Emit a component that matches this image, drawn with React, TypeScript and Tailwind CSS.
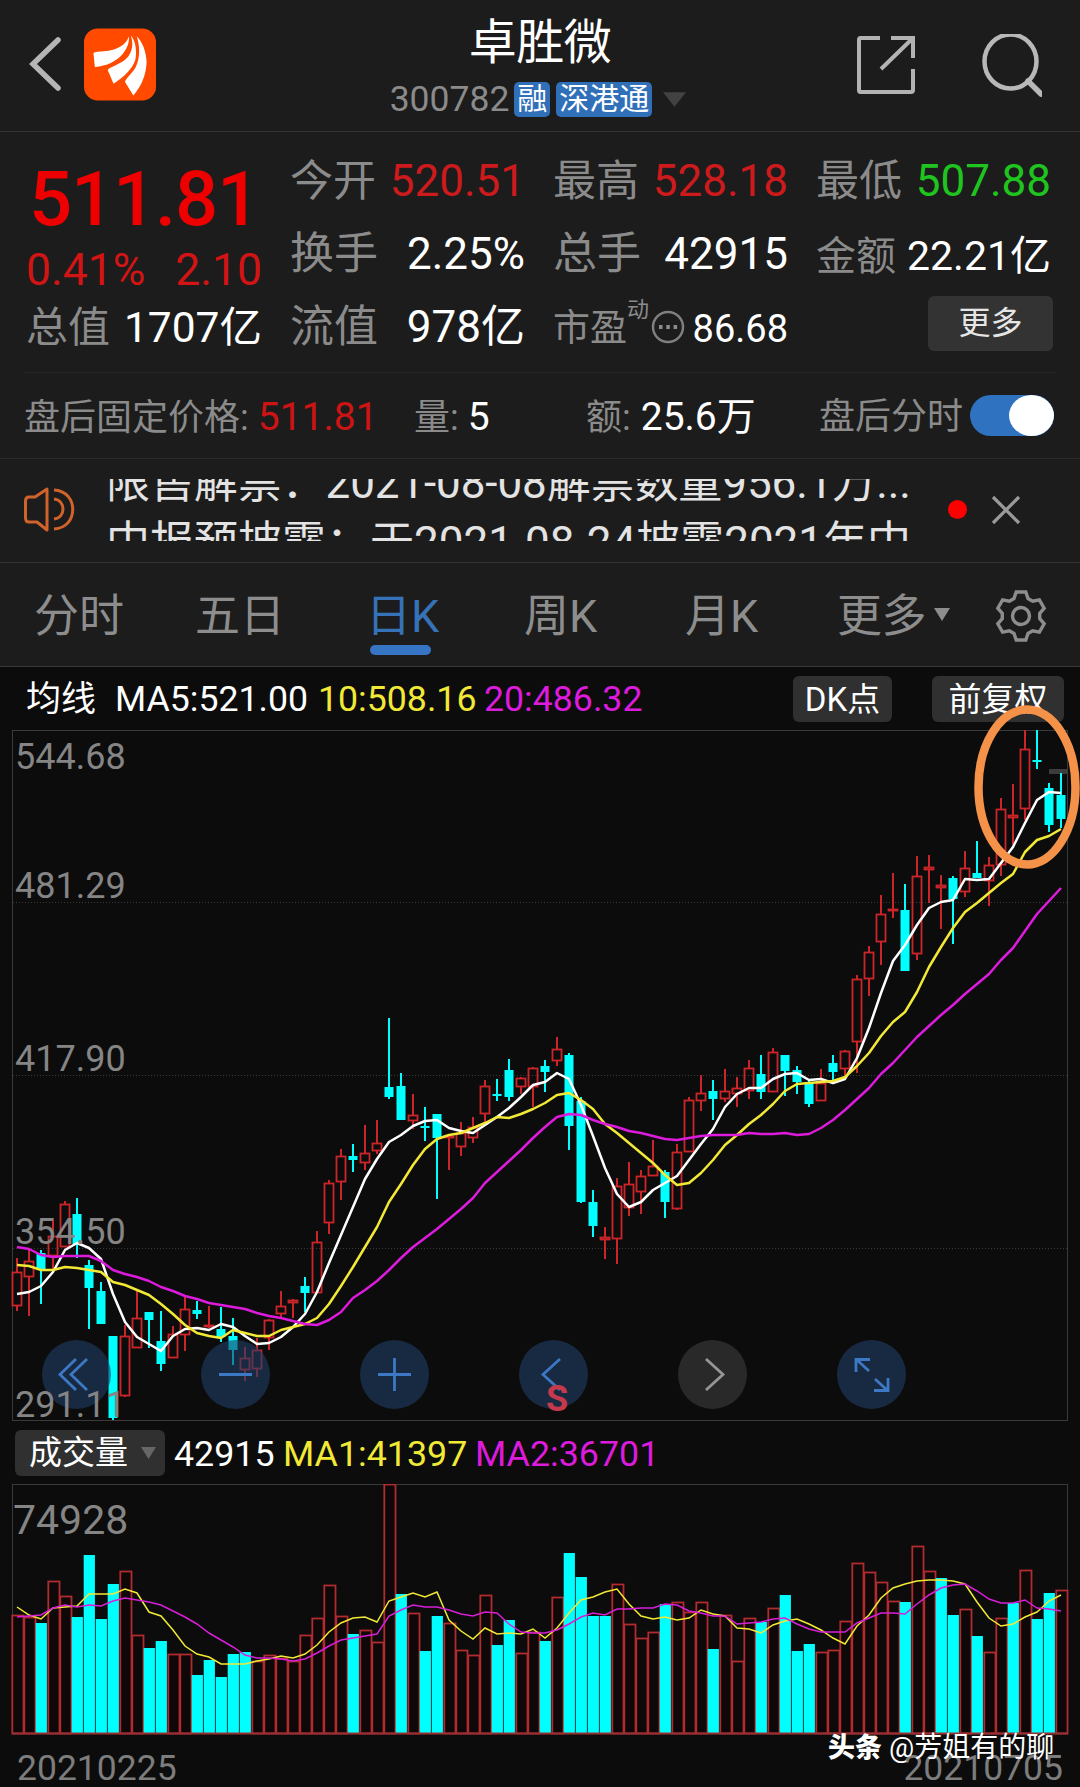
import React from "react";

type Candle = [kind: "r" | "c", high: number, top: number, bottom: number, low: number];

const X0 = 17;
const STEP = 12;
const UP = "#cc2529";
const DOWN = "#00ffff";

const candles: Candle[] = [
  ["r", 1258, 1272, 1306, 1311], ["r", 1249, 1261, 1277, 1316], ["c", 1250, 1253, 1269, 1304],
  ["r", 1218, 1236, 1256, 1270], ["r", 1201, 1204, 1247, 1247], ["c", 1198, 1214, 1244, 1258],
  ["c", 1260, 1265, 1288, 1329], ["c", 1282, 1291, 1324, 1324], ["c", 1336, 1336, 1418, 1420],
  ["r", 1325, 1336, 1396, 1397], ["r", 1291, 1318, 1348, 1348], ["c", 1312, 1312, 1320, 1348],
  ["c", 1311, 1341, 1364, 1371], ["r", 1326, 1334, 1358, 1358], ["r", 1295, 1309, 1335, 1351],
  ["c", 1301, 1310, 1314, 1319], ["r", 1306, 1325, 1327, 1328], ["c", 1307, 1329, 1337, 1342],
  ["c", 1318, 1336, 1350, 1365], ["r", 1347, 1358, 1370, 1381], ["r", 1338, 1350, 1369, 1377],
  ["r", 1319, 1320, 1338, 1350], ["r", 1291, 1306, 1314, 1318], ["r", 1299, 1300, 1303, 1318],
  ["c", 1277, 1286, 1293, 1312], ["r", 1231, 1242, 1293, 1293], ["r", 1180, 1183, 1223, 1234],
  ["r", 1149, 1156, 1182, 1200], ["c", 1144, 1156, 1160, 1172], ["r", 1125, 1153, 1163, 1170],
  ["r", 1120, 1143, 1151, 1154], ["c", 1018, 1087, 1097, 1099], ["c", 1073, 1086, 1120, 1120],
  ["r", 1094, 1115, 1121, 1129], ["c", 1107, 1126, 1128, 1141], ["c", 1114, 1114, 1138, 1199],
  ["r", 1135, 1136, 1138, 1170], ["r", 1122, 1133, 1147, 1156], ["r", 1117, 1127, 1138, 1143],
  ["r", 1080, 1086, 1114, 1125], ["c", 1079, 1094, 1096, 1101], ["c", 1059, 1070, 1097, 1101],
  ["r", 1077, 1078, 1087, 1094], ["r", 1067, 1068, 1087, 1107], ["c", 1060, 1066, 1072, 1092],
  ["r", 1037, 1049, 1061, 1066], ["c", 1053, 1055, 1126, 1150], ["c", 1097, 1101, 1202, 1203],
  ["c", 1190, 1202, 1226, 1237], ["r", 1227, 1237, 1240, 1259], ["r", 1178, 1186, 1239, 1264],
  ["r", 1162, 1184, 1208, 1216], ["r", 1170, 1176, 1192, 1214], ["r", 1140, 1166, 1176, 1176],
  ["c", 1170, 1172, 1202, 1218], ["r", 1144, 1152, 1209, 1210], ["r", 1097, 1100, 1152, 1152],
  ["r", 1075, 1093, 1101, 1111], ["c", 1080, 1091, 1099, 1120], ["r", 1069, 1091, 1099, 1102],
  ["r", 1077, 1088, 1094, 1107], ["r", 1060, 1068, 1091, 1099], ["c", 1055, 1074, 1092, 1099],
  ["r", 1048, 1052, 1092, 1092], ["c", 1055, 1055, 1071, 1096], ["c", 1066, 1070, 1082, 1094],
  ["c", 1080, 1082, 1104, 1107], ["r", 1069, 1083, 1101, 1101], ["c", 1055, 1063, 1072, 1081],
  ["r", 1050, 1051, 1069, 1075], ["r", 975, 979, 1042, 1073], ["r", 946, 952, 979, 996],
  ["r", 895, 914, 942, 965], ["r", 873, 909, 911, 918], ["c", 884, 910, 971, 971],
  ["r", 856, 876, 954, 960], ["r", 855, 867, 870, 903], ["r", 875, 885, 888, 929],
  ["c", 876, 878, 899, 944], ["r", 851, 868, 892, 897], ["c", 841, 873, 878, 878],
  ["r", 857, 865, 881, 906], ["r", 798, 809, 865, 876], ["r", 784, 815, 818, 845],
  ["r", 730, 749, 809, 820], ["c", 730, 760, 762, 769], ["c", 783, 788, 825, 832],
  ["c", 773, 795, 819, 828],
];

const ma5 = [
  1294, 1292, 1286, 1272, 1250, 1243, 1248, 1259, 1294, 1322, 1337, 1344, 1351, 1336, 1329, 1328, 1330, 1324, 1327,
  1336, 1344, 1343, 1337, 1327, 1314, 1292, 1263, 1235, 1207, 1179, 1159, 1142, 1135, 1126, 1121, 1120, 1128, 1131,
  1133, 1125, 1117, 1108, 1097, 1085, 1082, 1073, 1079, 1105, 1136, 1168, 1194, 1207, 1202, 1190, 1183, 1176, 1160,
  1144, 1129, 1107, 1094, 1088, 1088, 1079, 1074, 1073, 1080, 1079, 1083, 1079, 1058, 1028, 993, 961, 945, 925, 908,
  902, 900, 879, 880, 879, 863, 847, 823, 800, 792, 793,
];
const ma10 = [
  1265, 1266, 1270, 1270, 1267, 1268, 1270, 1272, 1282, 1285, 1290, 1295, 1304, 1314, 1325, 1333, 1336, 1338, 1330,
  1333, 1336, 1336, 1330, 1327, 1324, 1318, 1304, 1286, 1267, 1247, 1227, 1202, 1184, 1165, 1149, 1139, 1135, 1133,
  1128, 1123, 1117, 1118, 1114, 1109, 1103, 1095, 1093, 1100, 1109, 1124, 1133, 1143, 1153, 1163, 1175, 1185, 1183,
  1173, 1160, 1145, 1135, 1124, 1115, 1104, 1091, 1084, 1083, 1082, 1081, 1077, 1066, 1053, 1036, 1022, 1012, 992,
  967, 947, 928, 912, 903, 893, 883, 874, 852, 840, 836, 829,
];
const ma20 = [
  1247, 1249, 1255, 1257, 1256, 1256, 1256, 1261, 1270, 1274, 1277, 1281, 1287, 1291, 1296, 1299, 1303, 1305, 1307,
  1309, 1313, 1316, 1318, 1321, 1324, 1325, 1320, 1312, 1298, 1290, 1281, 1270, 1258, 1247, 1238, 1229, 1219, 1209,
  1198, 1183, 1172, 1161, 1150, 1138, 1127, 1117, 1114, 1115, 1120, 1124, 1127, 1131, 1133, 1136, 1139, 1140, 1138,
  1136, 1135, 1135, 1135, 1133, 1134, 1134, 1133, 1135, 1134, 1128, 1120, 1110, 1099, 1088, 1074, 1063, 1050, 1037,
  1026, 1015, 1005, 994, 984, 974, 960, 948, 931, 914, 901, 888,
];

const volumeKinds =
  "rrcrrcccc" + "rrccrrccccc" + "rrrrrrrrc" + "rrrcrccrrrrccrrcrcccc" + "rrrrcrrrc" + "rrrcrccc" + "rrrrrrrcrrcc" + "rcrrcrccr";
const volumeTops = [
  1615, 1617, 1623, 1581, 1596, 1617, 1555, 1619, 1584, 1571, 1635, 1648, 1641, 1654, 1654, 1675, 1660, 1677, 1654,
  1652, 1661, 1655, 1658, 1661, 1635, 1618, 1585, 1616, 1634, 1630, 1642, 1484, 1594, 1613, 1651, 1616, 1623, 1650,
  1655, 1595, 1645, 1620, 1653, 1632, 1641, 1597, 1553, 1577, 1616, 1616, 1584, 1624, 1638, 1632, 1604, 1602, 1612,
  1602, 1649, 1615, 1661, 1618, 1622, 1608, 1595, 1651, 1644, 1652, 1650, 1621, 1563, 1572, 1582, 1601, 1602, 1546,
  1571, 1578, 1615, 1609, 1636, 1652, 1618, 1603, 1570, 1619, 1593, 1590,
];
const volMa1 = [
  1607, 1615, 1619, 1608, 1607, 1606, 1594, 1594, 1594, 1589, 1593, 1612, 1616, 1630, 1646, 1654, 1657, 1664, 1664,
  1664, 1661, 1659, 1656, 1658, 1654, 1645, 1632, 1623, 1618, 1617, 1622, 1601, 1597, 1593, 1597, 1592, 1620, 1631,
  1639, 1628, 1634, 1633, 1634, 1629, 1638, 1628, 1613, 1600, 1597, 1592, 1589, 1604, 1616, 1619, 1617, 1620, 1618,
  1610, 1614, 1616, 1628, 1629, 1633, 1625, 1621, 1619, 1624, 1630, 1638, 1644, 1626, 1615, 1598, 1588, 1584, 1581,
  1580, 1580, 1581, 1584, 1602, 1618, 1626, 1624, 1617, 1612, 1601, 1595,
];
const volMa2 = [
  1617, 1616, 1615, 1608, 1605, 1607, 1605, 1606, 1601, 1598, 1600, 1602, 1605, 1611, 1617, 1624, 1633, 1640, 1647,
  1655, 1658, 1658, 1659, 1661, 1659, 1653, 1646, 1640, 1638, 1636, 1634, 1616, 1610, 1605, 1607, 1607, 1610, 1614,
  1616, 1612, 1613, 1624, 1632, 1633, 1633, 1630, 1624, 1617, 1613, 1615, 1609, 1609, 1608, 1608, 1604, 1605, 1611,
  1613, 1616, 1616, 1624, 1623, 1622, 1619, 1618, 1624, 1629, 1632, 1632, 1632, 1623, 1618, 1613, 1613, 1614, 1604,
  1595, 1588, 1585, 1584, 1591, 1599, 1603, 1603, 1600, 1608, 1609, 1611,
];

const line = (ys: number[]) => ys.map((y, i) => `${X0 + i * STEP},${y}`).join(" ");

function Header() {
  return (
    <header className="grid h-[132px] grid-cols-[1fr_320px_1fr] border-b border-[#343434]">
      <div className="flex items-start pl-[28px] pt-[28px]">
        <svg width="34" height="73" viewBox="0 0 34 73" className="shrink-0">
          <path d="M30 12 L5 36 L30 60" fill="none" stroke="#b5b5b5" strokeWidth="5.5" strokeLinecap="round" />
        </svg>
        <svg width="72" height="73" viewBox="0 0 73 73" className="ml-[22px] shrink-0">
          <rect width="73" height="73" rx="14" fill="#ff4a00" />
          <path d="M45.5 8C43 16 34 22 20 23C14 23.3 10 24 9.6 25L11 39C23 38 33 33 39 26C44 20 46 14 45.5 8Z" fill="#fff" />
          <path d="M47.5 7C51 18 48 27 40 33C33 37.500 27 39 24 42L30 56C41 49 49 41 52 32C54 22 52 12 47.500 7Z" fill="#fff" />
          <path d="M53.5 8C57 19 57 30 52 40C48 46 43 50 41.500 54L50 68C58 59 63 47 63.500 34C63 23 59 13 53.500 8Z" fill="#fff" />
        </svg>
      </div>
      <div className="flex flex-col items-center pt-[17px]">
        <h1 className="text-[48px] leading-[52px] tracking-[-0.5px] text-white">卓胜微</h1>
        <div className="-ml-[4px] mt-[12px] flex h-[36px] items-center text-[35.5px] leading-[36px] text-[#8b8b8b]">
          <span>300782</span>
          <span className="ml-[5px] h-[35px] w-[36px] rounded-[5px] bg-[#3070b9] text-center text-[30px] leading-[34px] text-white">融</span>
          <span className="ml-[6px] h-[35px] w-[96px] rounded-[5px] bg-[#3070b9] text-center text-[30px] leading-[34px] text-white">深港通</span>
          <svg width="23" height="15" viewBox="0 0 24 15" className="ml-[11px]">
            <path d="M0 0H24L12 15Z" fill="#424242" />
          </svg>
        </div>
      </div>
      <div className="flex justify-end pr-[38px] pt-[34px]">
        <svg width="60" height="62" viewBox="0 0 60 62" className="mr-[66px]" fill="none" stroke="#b3b3b3" strokeWidth="4">
          <path d="M24 4H4.500Q3 4 3 6V56Q3 58 4.500 58H55Q57 58 57 56V35" />
          <path d="M35 4H57V24M56 5L25 35" />
        </svg>
        <svg width="60" height="64" viewBox="0 0 60 64" fill="none" stroke="#b8b8b8" strokeWidth="4.500">
          <ellipse cx="27" cy="27.500" rx="26" ry="27" transform="translate(1.500 0)" />
          <path d="M46 47L59 60" strokeWidth="5.500" strokeLinecap="round" />
        </svg>
      </div>
    </header>
  );
}

function Cell({ label, value, labelClass, valueClass }: { label: string; value: string; labelClass: string; valueClass: string }) {
  return (
    <div className="flex items-baseline justify-between whitespace-nowrap">
      <span className={labelClass}>{label}</span>
      <span className={valueClass}>{value}</span>
    </div>
  );
}

function Quote() {
  return (
    <section className="px-[24px]">
      <div className="grid h-[241px] grid-cols-[236px_235px_235px_235px] grid-rows-[73px_73px_73px] gap-x-[28px] border-b border-[#272727] pl-[2px] pt-[13px]">
        <div className="row-span-2">
          <div className="pt-[14px] text-[76px] font-medium leading-[80px] tracking-[-1.2px] text-[#ee0000]">
            <span className="ml-[3px]">511.81</span>
          </div>
          <div className="mt-[5px] flex justify-between text-[44.5px] leading-[52px] text-[#d21414]">
            <span>0.41%</span>
            <span>2.10</span>
          </div>
        </div>
        <Cell label="今开" value="520.51" labelClass="text-[43px] leading-[73px] text-[#8b8b8b]" valueClass="text-[44px] leading-[73px] text-[#cc1a1d]" />
        <Cell label="最高" value="528.18" labelClass="text-[43px] leading-[73px] text-[#8b8b8b]" valueClass="text-[44px] leading-[73px] text-[#cc1a1d]" />
        <Cell label="最低" value="507.88" labelClass="text-[43px] leading-[73px] text-[#8b8b8b]" valueClass="text-[44px] leading-[73px] text-[#1fc41f]" />
        <Cell label="换手" value="2.25%" labelClass="text-[44px] leading-[73px] text-[#8b8b8b]" valueClass="text-[44px] leading-[73px] text-white" />
        <Cell label="总手" value="42915" labelClass="text-[44px] leading-[73px] text-[#8b8b8b]" valueClass="text-[44px] leading-[73px] text-white" />
        <Cell label="金额" value="22.21亿" labelClass="text-[40px] leading-[76px] text-[#8b8b8b]" valueClass="text-[41px] leading-[76px] text-white" />
        <Cell label="总值" value="1707亿" labelClass="text-[42px] leading-[74px] text-[#8b8b8b]" valueClass="text-[42.5px] leading-[74px] text-white" />
        <Cell label="流值" value="978亿" labelClass="text-[44px] leading-[73px] text-[#8b8b8b]" valueClass="text-[44px] leading-[73px] text-white" />
        <div className="flex text-[38px] leading-[76px]">
          <span className="text-[37px] text-[#8b8b8b]">市盈</span>
          <span className="text-[22px] leading-[38px] text-[#8b8b8b]">动</span>
          <svg width="34" height="34" viewBox="0 0 34 34" className="ml-[2px] mt-[19px]">
            <circle cx="17" cy="17" r="15" fill="none" stroke="#7f7f7f" strokeWidth="2.500" />
            <path d="M8 17h3.500M15.300 17h3.500M22.600 17h3.500" stroke="#8b8b8b" strokeWidth="4" />
          </svg>
          <span className="ml-auto text-white">86.68</span>
        </div>
        <div className="flex justify-end">
          <button className="-mr-[2px] mt-[5px] h-[55px] w-[125px] rounded-[6px] bg-[#333333] text-[32px] leading-[55px] text-[#e6e6e6]">更多</button>
        </div>
      </div>
      <div className="flex h-[85px] items-center whitespace-nowrap text-[36px] leading-[85px] text-[#8b8b8b]">
        <div className="w-[390px] pt-[4px]">
          盘后固定价格:<span className="ml-[9px] text-[39px] text-[#cc1414]">511.81</span>
        </div>
        <div className="w-[172px] pt-[4px]">
          量:<span className="ml-[9px] text-[39px] text-white">5</span>
        </div>
        <div className="w-[233px] pt-[4px]">
          额:<span className="ml-[10px] text-[39px] text-white">25.6万</span>
        </div>
        <div className="pt-[4px]">盘后分时</div>
        <div className="ml-[7px] flex h-[41px] w-[84px] justify-end rounded-full bg-[#2f72c0]">
          <div className="h-[41px] w-[45px] rounded-[50%] bg-white" />
        </div>
      </div>
    </section>
  );
}

function News() {
  return (
    <section className="flex h-[105px] items-center border-t border-b border-t-[#2a2a2a] border-b-[#303030] pl-[24px]">
      <svg width="52" height="46" viewBox="0 0 52 46" fill="none" stroke="#d0622c" strokeWidth="3" className="-mt-[2px]">
        <path d="M23 2V43L13 35H5Q1.500 35 1.500 31V14Q1.500 10 5 10H11Z" strokeLinejoin="round" />
        <path d="M30 12C42 13 42 31 30 32M30 3C55 4 55 41 30 42" />
      </svg>
      <div className="-mt-[1px] ml-[30px] h-[62px] w-[806px] overflow-hidden whitespace-nowrap text-[44px] leading-[60px] text-[#e3e3e3]">
        <div className="-mt-[26px]">
          <div className="w-[806px] tracking-[-0.1px]">限售解禁：2021-08-08解禁数量956.1万...</div>
          <div className="w-[806px] overflow-hidden">中报预披露：于2021-08-24披露2021年中</div>
        </div>
      </div>
      <div className="-mt-[2px] ml-[36px] size-[19px] rounded-full bg-[#ff0000]" />
      <svg width="30" height="30" viewBox="0 0 30 30" className="-mt-[2px] ml-[24px]">
        <path d="M2 2L28 28M28 2L2 28" stroke="#9a9a9a" strokeWidth="3.200" />
      </svg>
    </section>
  );
}

const TOOTH = [[-7, -17.5], [-4.800, -24], [4.800, -24], [7, -17.5]];

function gearPath(cx: number, cy: number) {
  const points = [0, 60, 120, 180, 240, 300].flatMap((deg) => {
    const a = (deg * Math.PI) / 180;
    return TOOTH.map(([x, y]) => [cx + x * Math.cos(a) - y * Math.sin(a), cy + x * Math.sin(a) + y * Math.cos(a)]);
  });
  return `M${points.map(([x, y]) => `${x.toFixed(1)} ${y.toFixed(1)}`).join("L")}Z`;
}

function Tabs() {
  return (
    <nav className="flex h-[104px] whitespace-nowrap border-b border-[#383838] pl-[34px] text-[45px] leading-[108px] text-[#8d8d8d]">
      <span className="w-[161px]">分时</span>
      <span className="w-[171px]">五日</span>
      <span className="relative w-[158px] text-[#3572b8]">
        日K
        <i className="absolute left-[4px] top-[82px] h-[10px] w-[61px] rounded-full bg-[#3575c4]" />
      </span>
      <span className="w-[161px]">周K</span>
      <span className="w-[152px]">月K</span>
      <span className="tracking-[-0.5px]">更多</span>
      <svg width="16" height="13" viewBox="0 0 16 13" className="ml-[8px] mt-[45px]">
        <path d="M0 0H16L8 13Z" fill="#8d8d8d" />
      </svg>
      <svg width="60" height="58" viewBox="0 0 60 58" className="ml-[41px] mt-[24px]" fill="none" stroke="#8d8d8d" strokeWidth="3.400">
        <path d={gearPath(30, 29)} />
        <circle cx="30" cy="29" r="8.500" />
      </svg>
    </nav>
  );
}

const circleIcons: { tone: string; stroke: string; icon: React.ReactNode }[] = [
  { tone: "bg-[#213e68]/60", stroke: "#3c78c3", icon: <path d="M34 19L18 34.500L34 50M45 19L29 34.500L45 50" /> },
  { tone: "bg-[#213e68]/60", stroke: "#3c78c3", icon: <path d="M18 34.500H51" /> },
  { tone: "bg-[#213e68]/60", stroke: "#3c78c3", icon: <path d="M18 34.500H51M34.500 18V51" /> },
  { tone: "bg-[#213e68]/60", stroke: "#3c78c3", icon: <path d="M41 19L24 34.500L41 50" /> },
  { tone: "bg-[#3d3d3d]/60", stroke: "#969696", icon: <path d="M28 19L45 34.500L28 50" /> },
  { tone: "bg-[#213e68]/60", stroke: "#3c78c3", icon: <path d="M19 32V19.500H33M20 20L32 31M51 38V50.500H37M50 50L38 39" /> },
];

function PriceChart() {
  return (
    <section>
      <div className="flex h-[63px] items-center whitespace-nowrap pl-[26px] text-[35.700px] leading-[63px]">
        <span className="w-[89px] pt-[2px] text-[35px] text-white">均线</span>
        <span className="w-[203px] pt-[2px] text-white">MA5:521.00</span>
        <span className="w-[166px] pt-[2px] text-[#f2e936]">10:508.16</span>
        <span className="w-[309px] pt-[2px] text-[#dc1bdc]">20:486.32</span>
        <button className="h-[46px] w-[99px] rounded-[6px] bg-[#303030] text-[33px] leading-[48px] text-white">DK点</button>
        <button className="ml-[40px] h-[46px] w-[132px] rounded-[6px] bg-[#303030] text-[33px] leading-[48px] text-white">前复权</button>
      </div>
      <div className="relative h-[691px]">
        <svg width="1080" height="691" viewBox="0 730 1080 691" className="block">
          <rect x="12.5" y="730.5" width="1055" height="690" fill="none" stroke="#3a3a3a" />
          {[902.5, 1075.5, 1248.5].map((y) => (
            <path key={y} d={`M13 ${y}H1068`} stroke="#3a3a3a" strokeDasharray="1 2" />
          ))}
          <rect x="1049" y="769" width="18" height="5" fill="#3c3c3c" />
          {candles.map(([kind, high, top, bottom, low], i) => {
            const x = X0 + i * STEP;
            return kind === "c" ? (
              <g key={i} fill={DOWN}>
                <rect x={x - 1} y={high} width="2" height={low - high} />
                <rect x={x - 4.5} y={top} width="9" height={bottom - top} />
              </g>
            ) : (
              <g key={i} stroke={UP} strokeWidth="2" fill="none">
                <path d={`M${x} ${high}V${top}M${x} ${bottom}V${low}`} />
                <rect x={x - 4.500} y={top + 0.500} width="9" height={Math.max(bottom - top - 1, 0.600)} strokeWidth="1.800" />
              </g>
            );
          })}
          <g fill="none" strokeLinejoin="round" strokeWidth="2.500">
            <polyline points={line(ma5)} stroke="#ffffff" />
            <polyline points={line(ma10)} stroke="#f2e936" />
            <polyline points={line(ma20)} stroke="#dc1bdc" />
          </g>
        </svg>
        <div className="absolute left-[42px] top-[610px] flex gap-[90px]">
          {circleIcons.map(({ tone, stroke, icon }, i) => (
            <button key={i} className={`size-[69px] rounded-full ${tone}`}>
              <svg width="69" height="69" viewBox="0 0 69 69" fill="none" stroke={stroke} strokeWidth="2.800">
                {icon}
              </svg>
            </button>
          ))}
        </div>
        <span className="absolute left-[546px] top-[651px] text-[36px] font-bold leading-[36px] text-[#c43a4c]">S</span>
        <span className="absolute left-[15px] top-[9px] text-[36px] leading-[36px] text-[#858585]">544.68</span>
        <span className="absolute left-[15px] top-[138px] text-[36px] leading-[36px] text-[#858585]">481.29</span>
        <span className="absolute left-[15px] top-[311px] text-[36px] leading-[36px] text-[#858585]">417.90</span>
        <span className="absolute left-[15px] top-[484px] text-[36px] leading-[36px] text-[#858585]">354.50</span>
        <span className="absolute left-[15px] top-[657px] text-[36px] leading-[36px] text-[#858585]">291.11</span>
        <svg width="108" height="166" viewBox="0 0 108 166" className="absolute left-[973px] top-[-26px]">
          <ellipse cx="54" cy="83" rx="48.500" ry="77.500" fill="none" stroke="#f5924a" strokeWidth="8.500" />
        </svg>
      </div>
    </section>
  );
}

function VolumeChart() {
  return (
    <section>
      <div className="flex h-[63px] items-center whitespace-nowrap pl-[15px] text-[35.800px] leading-[59px]">
        <button className="flex h-[46px] w-[150px] items-center rounded-[6px] bg-[#303030] pl-[14px] pt-px text-[33px] leading-[46px] text-white">
          成交量
          <svg width="15" height="12" viewBox="0 0 15 12" className="ml-[13px]">
            <path d="M0 0H15L7.500 12Z" fill="#666" />
          </svg>
        </button>
        <span className="ml-[9px] w-[109px] pt-[4px] text-white">42915</span>
        <span className="w-[192px] pt-[4px] text-[#f2e936]">MA1:41397</span>
        <span className="pt-[4px] text-[#dc1bdc]">MA2:36701</span>
      </div>
      <div className="relative h-[252px]">
        <svg width="1080" height="252" viewBox="0 1484 1080 252" className="block">
          <rect x="12.5" y="1484.500" width="1055" height="249" fill="none" stroke="#3a3a3a" />
          {volumeTops.map((top, i) => {
            const x = X0 + i * STEP;
            return volumeKinds[i] === "c" ? (
              <rect key={i} x={x - 5.300} y={top} width="11.200" height={1733 - top} fill={DOWN} />
            ) : (
              <rect key={i} x={x - 4.700} y={top + 0.500} width="11.200" height={1733 - top} fill="#0e0808" stroke="#b02c30" strokeWidth="1.800" />
            );
          })}
          <path d="M12 1733.500H1068" stroke="#9a3034" strokeWidth="2" />
          <g fill="none" strokeWidth="1.500">
            <polyline points={line(volMa1)} stroke="#f2e936" />
            <polyline points={line(volMa2)} stroke="#d71fd7" />
          </g>
        </svg>
        <span className="absolute left-[13px] top-[16px] text-[41px] leading-[40px] text-[#858585]">74928</span>
      </div>
      <div className="relative flex h-[51px] justify-between pl-[17px] pr-[17px] pt-[14px] text-[35.500px] leading-[36px] text-[#7d7d7d]">
        <span>20210225</span>
        <span>20210705</span>
        <div className="absolute left-[828px] top-[-4px] flex items-center whitespace-nowrap leading-[32px] text-white">
          <b className="text-[27px] font-black">头条</b>
          <span className="ml-[7px] text-[28px]">@芳姐有的聊</span>
        </div>
      </div>
    </section>
  );
}

export default function App() {
  return (
    <main className="h-[1787px] w-[1080px] overflow-hidden bg-[#1c1c1c] [font-family:Roboto,'Noto_Sans_CJK_SC',sans-serif]">
      <Header />
      <Quote />
      <News />
      <Tabs />
      <div className="bg-[#0c0c0c]">
        <PriceChart />
        <VolumeChart />
      </div>
    </main>
  );
}
